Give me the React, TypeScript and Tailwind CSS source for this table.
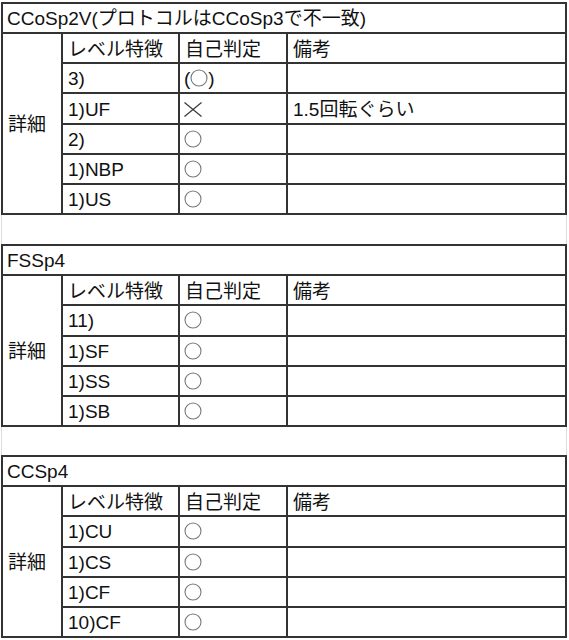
import React from "react";

const FONT = "font-['Liberation_Sans','Noto_Sans_CJK_JP',sans-serif]";

type Mark = "circle" | "paren" | "cross" | "";

function Circle() {
  return (
    <svg width="18" height="18" viewBox="0 0 18 18" className="shrink-0">
      <circle cx="9" cy="9" r="8" fill="none" stroke="#777" strokeWidth="1.1" />
    </svg>
  );
}

function Cross() {
  return (
    <svg width="18" height="15" viewBox="0 0 18 15" className="shrink-0">
      <line x1="0.5" y1="0.5" x2="17.5" y2="14.5" stroke="#333" strokeWidth="1.1" />
      <line x1="17.5" y1="0.5" x2="0.5" y2="14.5" stroke="#333" strokeWidth="1.1" />
    </svg>
  );
}

function MarkCell({ mark }: { mark: Mark }) {
  if (mark === "circle")
    return (
      <div className="flex items-center pl-[4px]">
        <Circle />
      </div>
    );
  if (mark === "cross")
    return (
      <div className="flex items-center pl-[4px] pt-[1px]">
        <Cross />
      </div>
    );
  if (mark === "paren")
    return (
      <div className="flex items-center pl-[4px]">
        <span>(</span>
        <Circle />
        <span>)</span>
      </div>
    );
  return null;
}

type Row = { level: string; mark: Mark; note?: string };

function Sheet({ title, rows }: { title: string; rows: Row[] }) {
  return (
    <div className="ml-[1px] w-[566px] border-2 border-[#333] text-[19px] text-[#111]">
      <div className="flex h-[30.17px] items-center border-b-2 border-[#333] pl-[4px] pt-[1px] leading-none">
        {title}
      </div>
      <div className="flex">
        <div className="flex w-[60px] shrink-0 items-center border-r-2 border-[#333] pl-[5px] pt-[2px] leading-none">
          詳細
        </div>
        <div className="flex flex-1 flex-col">
          <div className="flex h-[30.17px] border-b-2 border-[#333] leading-none">
            <div className="flex w-[117px] shrink-0 items-center border-r-2 border-[#333] pl-[5px] pt-[2px]">
              レベル特徴
            </div>
            <div className="flex w-[108px] shrink-0 items-center border-r-2 border-[#333] pl-[5px] pt-[2px]">
              自己判定
            </div>
            <div className="flex flex-1 items-center pl-[5px] pt-[2px]">備考</div>
          </div>
          {rows.map((r, i) => (
            <div
              key={i}
              className={
                i === rows.length - 1
                  ? "flex h-[28.17px] leading-none"
                  : "flex h-[30.17px] border-b-2 border-[#333] leading-none"
              }
            >
              <div className="flex w-[117px] shrink-0 items-center border-r-2 border-[#333] pl-[5px] pt-[1px]">
                {r.level}
              </div>
              <div className="flex w-[108px] shrink-0 items-center border-r-2 border-[#333]">
                <MarkCell mark={r.mark} />
              </div>
              <div className="flex flex-1 items-center pl-[5px] pt-[1px]">{r.note ?? ""}</div>
            </div>
          ))}
        </div>
      </div>
    </div>
  );
}

export default function App() {
  return (
    <div className={`${FONT} h-[640px] w-[569px] overflow-hidden bg-white pt-[2px]`}>
      <Sheet
        title="CCoSp2V(プロトコルはCCoSp3で不一致)"
        rows={[
          { level: "3)", mark: "paren" },
          { level: "1)UF", mark: "cross", note: "1.5回転ぐらい" },
          { level: "2)", mark: "circle" },
          { level: "1)NBP", mark: "circle" },
          { level: "1)US", mark: "circle" },
        ]}
      />
      <div className="ml-[1px] h-[29px] w-[566px] border-x border-[#dcdcdc]" />
      <Sheet
        title="FSSp4"
        rows={[
          { level: "11)", mark: "circle" },
          { level: "1)SF", mark: "circle" },
          { level: "1)SS", mark: "circle" },
          { level: "1)SB", mark: "circle" },
        ]}
      />
      <div className="ml-[1px] h-[28px] w-[566px] border-x border-[#dcdcdc]" />
      <Sheet
        title="CCSp4"
        rows={[
          { level: "1)CU", mark: "circle" },
          { level: "1)CS", mark: "circle" },
          { level: "1)CF", mark: "circle" },
          { level: "10)CF", mark: "circle" },
        ]}
      />
    </div>
  );
}
